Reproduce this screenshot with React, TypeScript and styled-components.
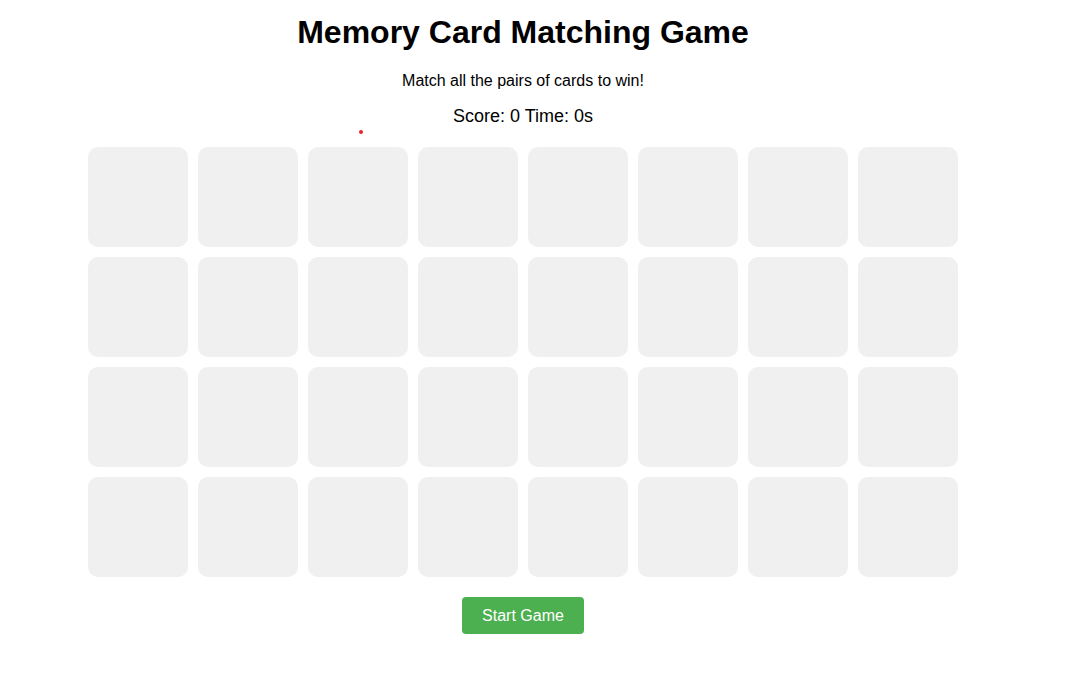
import React from "react";
import styled, { createGlobalStyle } from "styled-components";

const GlobalStyle = createGlobalStyle`
  html, body {
    margin: 0;
    padding: 0;
    background: #ffffff;
  }
  body {
    font-family: "Liberation Sans", Arial, sans-serif;
    color: #000000;
  }
`;

const Page = styled.div`
  position: relative;
  width: 1046px;
  display: flex;
  flex-direction: column;
  align-items: center;
  padding-top: 14px;
`;

const Title = styled.h1`
  margin: 0;
  font-size: 32px;
  line-height: 37px;
  font-weight: 700;
`;

const Subtitle = styled.p`
  margin: 21px 0 0;
  font-size: 16px;
  line-height: 18px;
`;

const Status = styled.div`
  margin-top: 16px;
  font-size: 18px;
  line-height: 21px;
`;

const Grid = styled.div`
  margin-top: 20px;
  display: grid;
  grid-template-columns: repeat(8, 100px);
  grid-auto-rows: 100px;
  gap: 10px;
`;

const Card = styled.div`
  background: #f0f0f0;
  border-radius: 10px;
`;

const StartButton = styled.button`
  margin-top: 20px;
  padding: 0 20px;
  height: 37px;
  border: none;
  border-radius: 4px;
  background: #4caf50;
  color: #ffffff;
  font-family: "Liberation Sans", Arial, sans-serif;
  font-size: 16px;
  cursor: pointer;
`;

const Dot = styled.span`
  position: absolute;
  left: 359px;
  top: 130px;
  width: 4px;
  height: 4px;
  border-radius: 50%;
  background: #e8262a;
`;

export default function App() {
  const cards = Array.from({ length: 32 }, (_, i) => i);
  return (
    <>
      <GlobalStyle />
      <Page>
        <Title>Memory Card Matching Game</Title>
        <Subtitle>Match all the pairs of cards to win!</Subtitle>
        <Status>Score: 0 Time: 0s</Status>
        <Grid>
          {cards.map((c) => (
            <Card key={c} />
          ))}
        </Grid>
        <StartButton>Start Game</StartButton>
        <Dot />
      </Page>
    </>
  );
}
